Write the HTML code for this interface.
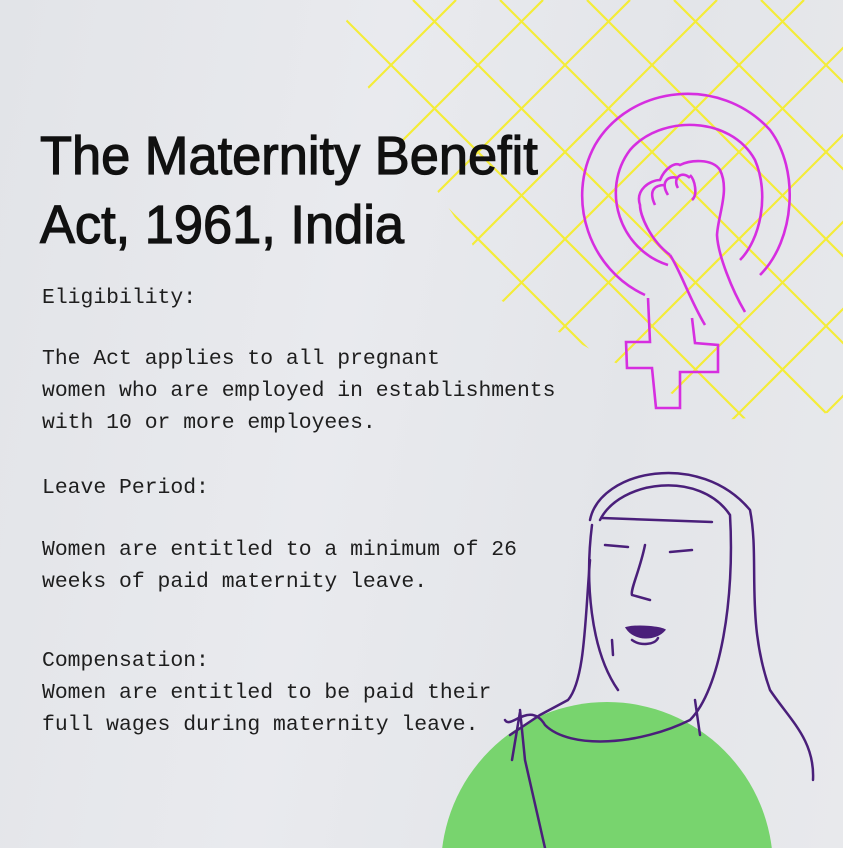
<!DOCTYPE html>
<html><head><meta charset="utf-8"><style>
html,body{margin:0;padding:0}
body{width:843px;height:848px;overflow:hidden;position:relative;background:linear-gradient(100deg,#e2e4e8 0%,#e9eaee 40%,#e3e5e9 70%,#e8e9ec 100%);font-family:"Liberation Mono",monospace}
h1{position:absolute;left:40px;top:122px;margin:0;font-family:"Liberation Sans Narrow","Liberation Sans",sans-serif;font-weight:normal;font-size:54px;line-height:69px;color:#111;white-space:nowrap;transform:scaleX(0.97);transform-origin:left;-webkit-text-stroke:1.2px #111}
.t{position:absolute;left:42px;font-size:21.4px;line-height:32px;color:#1e1e1e;white-space:pre}
svg{position:absolute;left:0;top:0}
</style></head><body>
<svg width="843" height="848">
<defs><clipPath id="c"><polygon points="335,38 360,0 843,0 843,412 720,420 500,300 470,240"/></clipPath></defs>
<g clip-path="url(#c)" stroke="#f4ec38" stroke-width="2.2" fill="none">
<line x1="239" y1="0" x2="659" y2="420"/><line x1="326" y1="0" x2="746" y2="420"/><line x1="413" y1="0" x2="833" y2="420"/><line x1="500" y1="0" x2="920" y2="420"/><line x1="587" y1="0" x2="1007" y2="420"/><line x1="674" y1="0" x2="1094" y2="420"/><line x1="761" y1="0" x2="1181" y2="420"/><line x1="152" y1="0" x2="572" y2="420"/>
<line x1="456" y1="0" x2="36" y2="420"/><line x1="543" y1="0" x2="123" y2="420"/><line x1="630" y1="0" x2="210" y2="420"/><line x1="717" y1="0" x2="297" y2="420"/><line x1="804" y1="0" x2="384" y2="420"/><line x1="891" y1="0" x2="471" y2="420"/><line x1="978" y1="0" x2="558" y2="420"/><line x1="1065" y1="0" x2="645" y2="420"/><line x1="1152" y1="0" x2="732" y2="420"/><line x1="1239" y1="0" x2="819" y2="420"/>
</g>
<g stroke="#d62ee0" stroke-width="2.6" fill="none">
<path d="M645 295 C590 270 565 200 595 145 C630 85 720 75 770 130 C800 170 795 240 760 275"/>
<path d="M668 265 C620 250 600 190 630 150 C660 115 730 115 755 160 C770 195 760 240 740 260"/>
<path d="M648 298 L650 342 L626 342 L627 368 L652 368 L656 408 L680 408 L680 372 L718 372 L718 345 L695 343 L692 318"/>
<path d="M670 255 C650 240 640 215 640 205 C635 190 650 180 660 180 C665 168 675 162 680 165 C690 160 712 158 720 170 C730 190 718 215 717 235 C718 255 732 290 745 312"/>
<path d="M670 255 C680 270 690 300 705 325"/>
<path d="M655 205 C648 190 655 185 665 185 M668 195 C660 182 668 175 678 178 M678 188 C672 178 682 170 690 178 M690 175 C695 180 698 195 692 200"/>
</g>
<circle cx="607" cy="868" r="166" fill="#78d46e"/>
<g stroke="#4a1f7a" stroke-width="2.5" fill="none" stroke-linecap="round">
<path d="M590 520 C600 470 700 450 750 510 C760 560 745 620 770 690 C790 720 815 740 813 780"/>
<path d="M600 520 C620 480 700 470 730 515 C735 600 720 690 690 720 C640 745 570 750 545 725 C530 700 510 730 505 720"/>
<path d="M602 518 L712 522"/>
<path d="M592 525 C585 580 590 650 618 690"/>
<path d="M605 545 L628 547 M670 552 L692 550"/>
<path d="M645 545 C640 570 630 590 632 595 L650 600"/>
<path d="M627 628 C640 625 660 628 664 630 C655 640 635 640 627 628 Z" fill="#4a1f7a"/>
<path d="M632 640 C640 646 655 645 658 638"/>
<path d="M590 560 C585 620 585 680 568 700 L540 715 L510 735 M520 710 L525 760 L545 848 M520 712 L512 760"/>
<path d="M613 655 L612 640 M700 735 L695 700"/>
</g>
</svg>
<h1>The Maternity Benefit<br>Act, 1961, India</h1>
<div class="t" style="top:282px">Eligibility:</div>
<div class="t" style="top:343px">The Act applies to all pregnant
women who are employed in establishments
with 10 or more employees.</div>
<div class="t" style="top:472px">Leave Period:</div>
<div class="t" style="top:534px">Women are entitled to a minimum of 26
weeks of paid maternity leave.</div>
<div class="t" style="top:645px">Compensation:
Women are entitled to be paid their
full wages during maternity leave.</div>
</body></html>
